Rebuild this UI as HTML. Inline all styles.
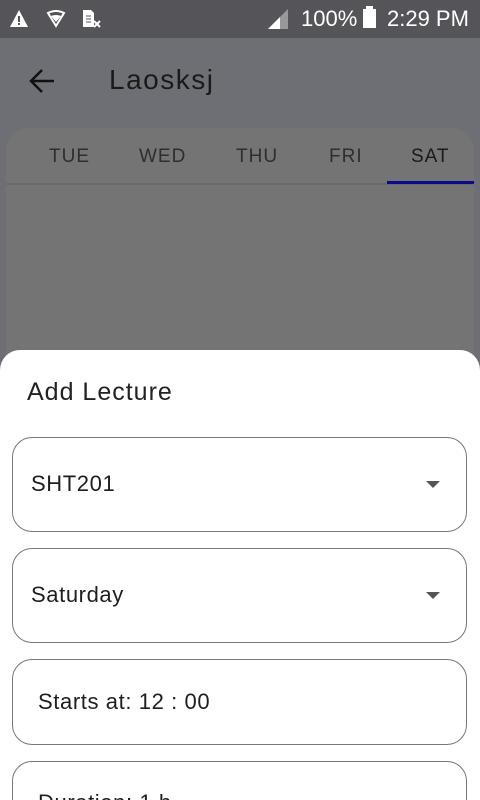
<!DOCTYPE html>
<html style="width:480px;height:800px;overflow:hidden"><head><style>
body{margin:0;width:480px;height:800px;overflow:hidden;position:relative;font-family:"Liberation Sans",sans-serif;background:#6e6f74}
.sb{position:absolute;top:0;left:0;width:480px;height:38px;background:#545459;color:#fff}
.tabs{position:absolute;left:6px;top:128px;width:468px;height:240px;background:#747474;border-radius:22px 22px 0 0}
.tab{position:absolute;top:146px;font-size:19px;color:#2e2e2e;letter-spacing:1px}
.sheet{position:absolute;left:0;top:350px;width:480px;height:450px;background:#fff;border-radius:20px 20px 0 0;overflow:hidden}
.f{position:absolute;left:12px;width:455px;border:1.5px solid #777;border-radius:20px;box-sizing:border-box;font-size:22px;color:#1e1e1e;letter-spacing:.6px}
.f span{position:absolute;left:18px}
.tri{position:absolute;right:26px;width:0;height:0;border-left:7px solid transparent;border-right:7px solid transparent;border-top:7px solid #555}
</style></head><body>
<div class="sb">
<svg style="position:absolute;left:9px;top:9px" width="20" height="19"><path d="M10 1L19 18H1Z" fill="#fff"/><rect x="9" y="7" width="2" height="6" fill="#545459"/><rect x="9" y="14" width="2" height="2" fill="#545459"/></svg>
<svg style="position:absolute;left:46px;top:10px" width="20" height="18"><path d="M2 3Q10-1 18 3L10 16Z" fill="none" stroke="#fff" stroke-width="2"/><path d="M5 6Q10 4 15 6L10 12Z" fill="#fff"/></svg>
<svg style="position:absolute;left:82px;top:9px" width="20" height="20"><path d="M1 1H9L12 4V18H1Z" fill="#fff"/><path d="M4 7h5M4 10h5M4 13h5" stroke="#545459"/><path d="M12 12l6 6M18 12l-6 6" stroke="#fff" stroke-width="2"/></svg>
<svg style="position:absolute;left:268px;top:9px" width="20" height="20"><path d="M0 20L20 0V20Z" fill="#999"/><path d="M0 20L12 8V20Z" fill="#fff"/></svg>
<span style="position:absolute;left:301px;top:6px;font-size:22px">100%</span>
<div style="position:absolute;left:363px;top:9px;width:13px;height:19px;background:#fff"></div><div style="position:absolute;left:366px;top:6px;width:7px;height:3px;background:#fff"></div>
<span style="position:absolute;left:387px;top:6px;font-size:22px">2:29 PM</span>
</div>
<svg style="position:absolute;left:28px;top:68px" width="28" height="26"><path d="M26 13H3M14 2L3 13L14 24" fill="none" stroke="#111" stroke-width="2.5"/></svg>
<div style="position:absolute;left:109px;top:64px;font-size:28px;color:#1a1a1a;letter-spacing:1.5px">Laosksj</div>
<div class="tabs"></div>
<div style="position:absolute;left:6px;top:183px;width:468px;height:2px;background:#6a6a6a"></div>
<div class="tab" style="left:49px">TUE</div>
<div class="tab" style="left:139px">WED</div>
<div class="tab" style="left:236px">THU</div>
<div class="tab" style="left:329px">FRI</div>
<div class="tab" style="left:411px;color:#1a1a1a">SAT</div>
<div style="position:absolute;left:387px;top:181px;width:87px;height:3px;background:#0a0a8a"></div>
<div class="sheet">
<div style="position:absolute;left:27px;top:28px;font-size:25px;color:#222;letter-spacing:1px">Add Lecture</div>
<div class="f" style="top:87px;height:95px"><span style="top:33px">SHT201</span><div class="tri" style="top:43px"></div></div>
<div class="f" style="top:198px;height:95px"><span style="top:33px">Saturday</span><div class="tri" style="top:43px"></div></div>
<div class="f" style="top:309px;height:86px"><span style="top:29px;left:25px">Starts at: 12 : 00</span></div>
<div class="f" style="top:411px;height:80px"><span style="top:28px;left:25px">Duration: 1 h</span></div>
</div>
</body></html>
